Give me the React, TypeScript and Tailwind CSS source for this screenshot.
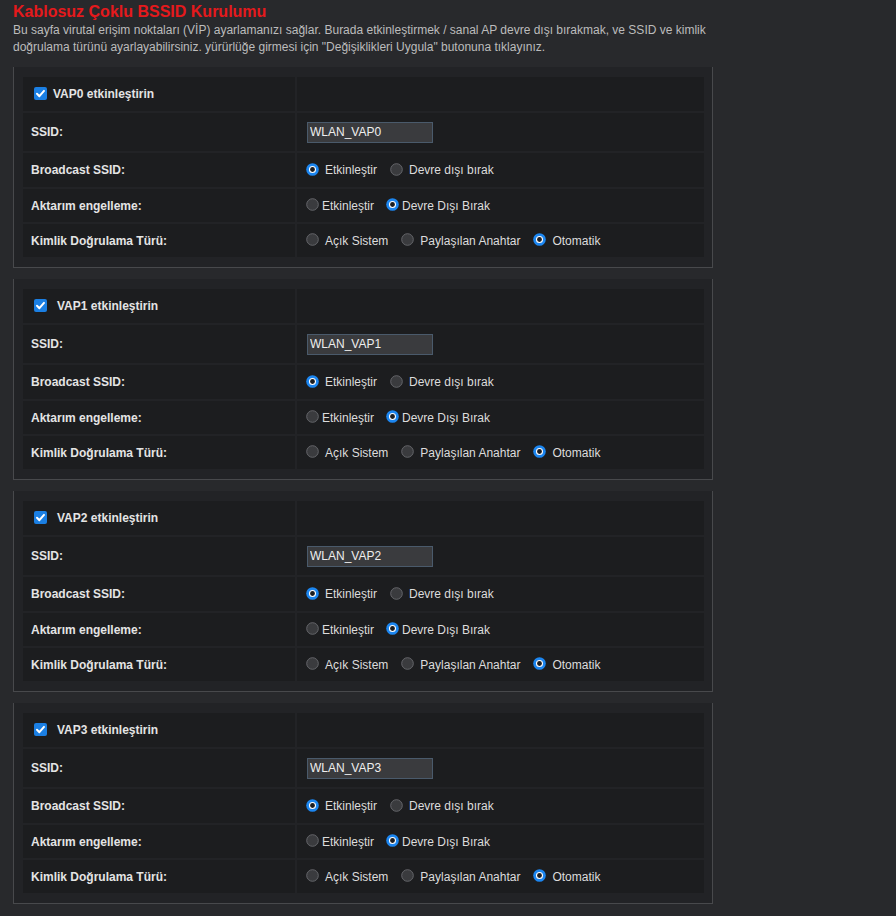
import React from "react";

type Opt = { label: string; on: boolean };

function Radio({ on }: { on: boolean }) {
  return on ? (
    <svg width="13" height="13" viewBox="0 0 13 13" className="shrink-0">
      <circle cx="6.5" cy="6.5" r="6.3" fill="#1c86f0" />
      <circle cx="6.5" cy="6.5" r="3" fill="#1b1c1f" stroke="#ffffff" strokeWidth="1.1" />
    </svg>
  ) : (
    <svg width="13" height="13" viewBox="0 0 13 13" className="shrink-0">
      <circle cx="6.5" cy="6.5" r="5.8" fill="#3a3b3e" stroke="#6b6c70" strokeWidth="0.9" />
    </svg>
  );
}

function Check() {
  return (
    <svg width="13" height="13" viewBox="0 0 13 13" className="shrink-0">
      <rect x="0" y="0" width="13" height="13" rx="2" fill="#1b7fe3" />
      <path d="M3 6.8 L5.4 9.2 L10 3.9" fill="none" stroke="#fff" strokeWidth="2" strokeLinecap="round" strokeLinejoin="round" />
    </svg>
  );
}

function RadioGroup({ opts, tight }: { opts: Opt[]; tight?: boolean }) {
  return (
    <div className={`flex items-center ${tight ? "gap-[12px]" : "gap-[13px]"}`}>
      {opts.map((o) => (
        <label key={o.label} className={`flex items-center ${tight ? "gap-[3px]" : "gap-[6px]"}`}>
          <span className="-mt-[2px] flex">
            <Radio on={o.on} />
          </span>
          <span>{o.label}</span>
        </label>
      ))}
    </div>
  );
}

function Row({ h, label, children }: { h: string; label: React.ReactNode; children?: React.ReactNode }) {
  return (
    <div className={`flex gap-[2px] ${h}`}>
      <div className="flex w-[272px] items-center bg-[#1c1d1f] pl-[8px] font-bold text-[#e4e4e4]">{label}</div>
      <div className="flex flex-1 items-center bg-[#1c1d1f] pl-[9px] text-[#dcdcdc]">{children}</div>
    </div>
  );
}

function VapPanel({ idx }: { idx: number }) {
  return (
    <div className="mb-[11px] w-[700px] border-x border-b border-[#48494c] bg-[#222326] pb-[10px] pl-[9px] pr-[8px] pt-[10px]">
      <div className="flex flex-col gap-[2px]">
        <Row
          h="h-[34px]"
          label={
            <span className="flex items-center pl-[3px]">
              <span className="-mt-[2px] flex">
                <Check />
              </span>
              <span className={idx === 0 ? "ml-[6px]" : "ml-[10px]"}>VAP{idx} etkinleştirin</span>
            </span>
          }
        />
        <Row h="h-[38px]" label="SSID:">
          <input
            readOnly
            value={`WLAN_VAP${idx}`}
            className="ml-[1px] h-[21px] w-[126px] border border-[#4a5a6b] bg-[#3a3b3e] px-[2px] text-[12px] text-[#eeeeee] outline-none"
          />
        </Row>
        <Row h="h-[34px]" label="Broadcast SSID:">
          <RadioGroup
            opts={[
              { label: "Etkinleştir", on: true },
              { label: "Devre dışı bırak", on: false },
            ]}
          />
        </Row>
        <Row h="h-[33px]" label="Aktarım engelleme:">
          <RadioGroup
            tight
            opts={[
              { label: "Etkinleştir", on: false },
              { label: "Devre Dışı Bırak", on: true },
            ]}
          />
        </Row>
        <Row h="h-[33px]" label="Kimlik Doğrulama Türü:">
          <RadioGroup
            opts={[
              { label: "Açık Sistem", on: false },
              { label: "Paylaşılan Anahtar", on: false },
              { label: "Otomatik", on: true },
            ]}
          />
        </Row>
      </div>
    </div>
  );
}

export default function App() {
  return (
    <div className="min-h-[916px] w-full bg-[#28292c] pl-[13px] text-[12px] font-['Liberation_Sans',Arial,sans-serif]">
      <h1 className="pt-[2px] text-[16px] font-bold leading-[20px] text-[#e5191c]">Kablosuz Çoklu BSSID Kurulumu</h1>
      <p className="leading-[17px] text-[#bcbcbc]">
        Bu sayfa virutal erişim noktaları (VİP) ayarlamanızı sağlar. Burada etkinleştirmek / sanal AP devre dışı bırakmak, ve SSID ve kimlik
        <br />
        doğrulama türünü ayarlayabilirsiniz. yürürlüğe girmesi için "Değişiklikleri Uygula" butonuna tıklayınız.
      </p>
      <div className="mt-[11px]">
        {[0, 1, 2, 3].map((i) => (
          <VapPanel key={i} idx={i} />
        ))}
      </div>
    </div>
  );
}
